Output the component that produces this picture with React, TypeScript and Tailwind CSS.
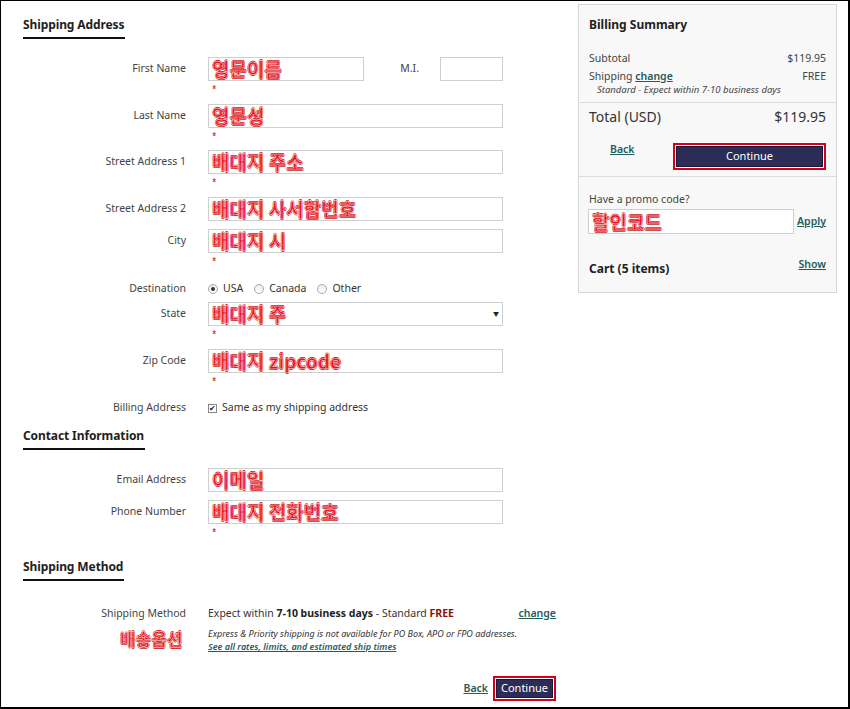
import React from "react";

const redBase =
  "text-[#ec1120] font-bold font-['Noto_Sans_CJK_KR',sans-serif] [-webkit-text-stroke:0.5px_#ffffff] [text-shadow:0.6px_0_0_#c40000,-0.6px_0_0_#c40000,0_0.6px_0_#c40000,0_-0.6px_0_#c40000]";
const red = `${redBase} text-[19px] leading-[20px]`;

function Asterisk() {
  return <div className="h-[23px] pl-[4px] pt-[3px] text-[8px] leading-[10px] text-[#c00]">*</div>;
}

function Input({ value, w = "w-[295px]" }: { value?: string; w?: string }) {
  return (
    <div className={`${w} h-[24px] border border-[#cfcfcf] bg-white flex items-center pl-[3px]`}>
      {value && <span className={`${red} whitespace-nowrap`}>{value}</span>}
    </div>
  );
}

function Label({ children }: { children: React.ReactNode }) {
  return (
    <div className="w-[163px] h-[24px] flex items-center justify-end text-[10.5px] text-[#444] shrink-0">
      {children}
    </div>
  );
}

function Field({
  label,
  value,
  req = true,
  h,
}: {
  label: string;
  value?: string;
  req?: boolean;
  h: string;
}) {
  return (
    <div className={`flex items-start ${h}`}>
      <Label>{label}</Label>
      <div className="ml-[22px]">
        <Input value={value} />
        {req && <Asterisk />}
      </div>
    </div>
  );
}

function Heading({ children, mt }: { children: React.ReactNode; mt: string }) {
  return (
    <div className={`flex ${mt}`}>
      <div className="border-b-2 border-[#111] pb-[4px] pr-[1px] text-[12px] font-bold leading-[16px] text-[#222] tracking-[-0.1px]">
        {children}
      </div>
    </div>
  );
}

function Radio({ on, label }: { on?: boolean; label: string }) {
  return (
    <div className="flex items-center mr-[11px]">
      <span className="w-[10px] h-[10px] rounded-full border border-[#a8a8a8] bg-gradient-to-b from-[#ececec] to-[#ffffff] flex items-center justify-center">
        {on && <span className="w-[4px] h-[4px] rounded-full bg-[#333]" />}
      </span>
      <span className="ml-[5px] text-[10.5px] text-[#333]">{label}</span>
    </div>
  );
}

function ContinueBtn({ w, h }: { w: string; h: string }) {
  return (
    <div className={`border-2 border-[#d7001b] p-px ${w} ${h} bg-white`}>
      <div className="w-full h-full bg-[#2c2d56] border border-[#15163a] flex items-center justify-center text-white text-[11px]">
        Continue
      </div>
    </div>
  );
}

const link = "text-[#1f5c5c] underline font-semibold";

export default function App() {
  return (
    <div className="w-[850px] h-[709px] box-border border-l border-t border-r-2 border-b-2 border-black bg-white flex overflow-hidden font-['Noto_Sans','Noto_Sans_CJK_KR',sans-serif] text-[#333]">
      {/* Left column */}
      <div className="w-[577px] shrink-0 pl-[22px]">
        <Heading mt="mt-[16px]">Shipping Address</Heading>

        <div className="mt-[18px]">
          <div className="flex items-start h-[47px]">
            <Label>First Name</Label>
            <div className="ml-[22px]">
              <Input value="영문이름" w="w-[156px]" />
              <Asterisk />
            </div>
            <div className="w-[55px] h-[24px] flex items-center justify-end text-[10.5px] text-[#444]">M.I.</div>
            <div className="ml-[21px]">
              <Input w="w-[63px]" />
            </div>
          </div>
          <Field label="Last Name" value="영문성" h="h-[46px]" />
          <Field label="Street Address 1" value="배대지 주소" h="h-[47px]" />
          <Field label="Street Address 2" value="배대지 사서함번호" req={false} h="h-[32px]" />
          <Field label="City" value="배대지 시" h="h-[47px]" />

          <div className="flex items-center h-[26px]">
            <div className="w-[163px] flex justify-end text-[10.5px] text-[#444]">Destination</div>
            <div className="ml-[22px] flex items-center">
              <Radio on label="USA" />
              <Radio label="Canada" />
              <Radio label="Other" />
            </div>
          </div>

          <div className="flex items-start h-[47px]">
            <Label>State</Label>
            <div className="ml-[22px]">
              <div className="w-[295px] h-[24px] border border-[#cfcfcf] bg-white flex items-center justify-between pl-[3px] pr-[3px]">
                <span className={`${red} whitespace-nowrap`}>배대지 주</span>
                <span className="text-[6px] text-[#222] leading-none">▼</span>
              </div>
              <Asterisk />
            </div>
          </div>

          <Field label="Zip Code" value="배대지 zipcode" h="h-[47px]" />

          <div className="flex items-center h-[24px]">
            <div className="w-[163px] flex justify-end text-[10.5px] text-[#444]">Billing Address</div>
            <div className="ml-[22px] flex items-center">
              <span className="w-[9px] h-[9px] border border-[#888] bg-white flex items-center justify-center text-[8px] leading-none text-[#222]">
                ✔
              </span>
              <span className="ml-[5px] text-[10.5px] text-[#333]">Same as my shipping address</span>
            </div>
          </div>
        </div>

        <Heading mt="mt-[8px]">Contact Information</Heading>

        <div className="mt-[18px]">
          <Field label="Email Address" value="이메일" req={false} h="h-[32px]" />
          <Field label="Phone Number" value="배대지 전화번호" h="h-[47px]" />
        </div>

        <Heading mt="mt-[12px]">Shipping Method</Heading>

        <div className="mt-[24px] flex items-start">
          <div className="w-[163px] shrink-0">
            <div className="h-[16px] leading-[16px] text-right text-[10.5px] text-[#444]">Shipping Method</div>
            <div className={`mt-[8px] pl-[97px] text-[17px] leading-[20px] whitespace-nowrap ${redBase}`}>배송옵션</div>
          </div>
          <div className="ml-[22px] w-[348px]">
            <div className="h-[16px] leading-[16px] flex justify-between text-[10.5px]">
              <span className="text-[#333]">
                Expect within <b className="text-[#222]">7-10 business days</b> - Standard{" "}
                <b className="text-[#8a1111]">FREE</b>
              </span>
              <span className={`${link} text-[10.5px]`}>change</span>
            </div>
            <div className="mt-[7px] h-[12px] leading-[12px] text-[9px] italic text-[#333]">
              Express &amp; Priority shipping is not available for PO Box, APO or FPO addresses.
            </div>
            <div className="h-[13px] leading-[13px] text-[9px] italic font-semibold text-[#1f5c5c] underline">
              See all rates, limits, and estimated ship times
            </div>
            <div className="mt-[23px] flex justify-end items-center">
              <span className={`${link} text-[10.5px] mr-[5px]`}>Back</span>
              <ContinueBtn w="w-[63px]" h="h-[25px]" />
            </div>
          </div>
        </div>
      </div>

      {/* Right column */}
      <div className="mt-[3px] w-[259px] h-[289px] shrink-0 border border-[#d6d6d6] bg-[#f8f8f8] flex flex-col">
        <div className="px-[10px] pt-[11px] pb-[6px] border-b border-[#dcdcdc]">
          <div className="h-[18px] leading-[18px] text-[12px] font-bold text-[#222]">Billing Summary</div>
          <div className="mt-[16px] h-[16px] leading-[16px] flex justify-between text-[10.5px] text-[#444]">
            <span>Subtotal</span>
            <span>$119.95</span>
          </div>
          <div className="mt-[2px] h-[16px] leading-[16px] flex justify-between text-[10.5px] text-[#444]">
            <span>
              Shipping <span className={link}>change</span>
            </span>
            <span>FREE</span>
          </div>
          <div className="h-[12px] leading-[12px] pl-[8px] text-[9.5px] italic text-[#444]">
            Standard - Expect within 7-10 business days
          </div>
        </div>
        <div className="px-[10px] pt-[4px] pb-[6px] border-b border-[#dcdcdc]">
          <div className="h-[20px] leading-[20px] flex justify-between text-[14px] text-[#333]">
            <span>Total (USD)</span>
            <span>$119.95</span>
          </div>
          <div className="mt-[16px] flex items-start justify-between">
            <span className={`${link} text-[10.5px] ml-[21px] mt-[-1px]`}>Back</span>
            <ContinueBtn w="w-[153px]" h="h-[27px]" />
          </div>
        </div>
        <div className="px-[10px] pt-[14px]">
          <div className="h-[16px] leading-[16px] text-[10.5px] text-[#444]">Have a promo code?</div>
          <div className="mt-[2px] flex items-center justify-between -ml-px">
            <div className="w-[206px] h-[25px] border border-[#cfcfcf] bg-white flex items-center pl-[3px]">
              <span className={`${red} whitespace-nowrap`}>할인코드</span>
            </div>
            <span className={`${link} text-[10.5px]`}>Apply</span>
          </div>
          <div className="mt-[26px] flex justify-between items-start">
            <span className="h-[18px] leading-[18px] text-[12px] font-bold text-[#222]">Cart (5 items)</span>
            <span className={`${link} text-[10.5px] mt-[-3px]`}>Show</span>
          </div>
        </div>
      </div>
    </div>
  );
}
